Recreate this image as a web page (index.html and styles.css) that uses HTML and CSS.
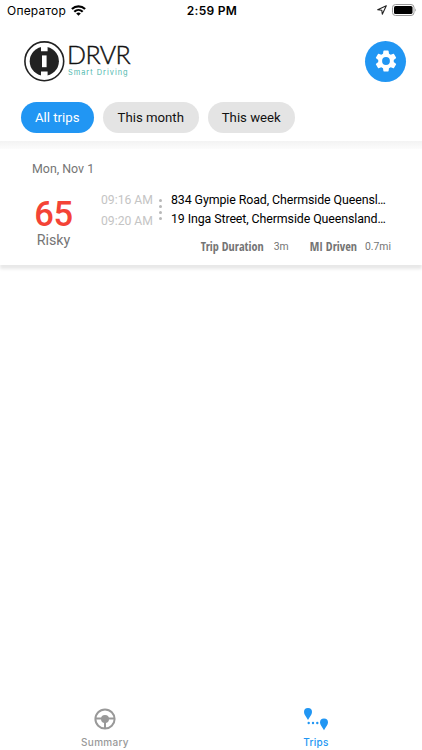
FILE: index.html
```
<!DOCTYPE html>
<html lang="en">
<head>
<meta charset="UTF-8">
<meta name="viewport" content="width=device-width, initial-scale=1.0">
<title>Trips - DRVR</title>
<link rel="stylesheet" href="styles.css">
</head>
<body>

<div class="status-bar">
  <div class="carrier">
    <span>Оператор</span>
    <svg width="15" height="11" viewBox="0 0 15 11" fill="none" stroke="#000" stroke-width="2.2">
      <path d="M.9 4C4.7.4 10.3.4 14.1 4M3.3 6.7C5.7 4.4 9.3 4.4 11.7 6.7"/>
      <path d="M7.5 10.8L5.2 8.4Q7.5 6.5 9.8 8.4Z" fill="#000" stroke="none"/>
    </svg>
  </div>
  <div class="time">2:59 PM</div>
  <div class="indicators">
    <svg width="10" height="10" viewBox="0 0 10 10" fill="none" stroke="#222" stroke-width="1.1" stroke-linejoin="round">
      <path d="M9.3.7L.7 4.7L4.8 5.2L5.3 9.3Z"/>
    </svg>
    <svg width="25" height="12" viewBox="0 0 25 12">
      <rect x=".5" y=".5" width="21.5" height="11" rx="3" fill="#fff" stroke="#999"/>
      <rect x="2" y="2" width="18.5" height="8" rx="1.6"/>
      <path d="M23.2 4.2Q25 6 23.2 7.8Z" fill="#999"/>
    </svg>
  </div>
</div>

<header>
  <div class="logo">
    <svg width="41" height="41" viewBox="0 0 41 41">
      <circle cx="20.3" cy="20.3" r="19.4" fill="#fff" stroke="#222" stroke-width="1.6"/>
      <circle cx="20.3" cy="20.3" r="14.6" fill="#222"/>
      <path d="M17 5h6.6v5.2H17zM17 30.4h6.6v5.2H17z" fill="#fff"/>
      <path d="M18 14.4h4.6v11.8H18z" fill="#fff"/>
    </svg>
    <div class="logo-text">
      <div class="logo-name">DRVR</div>
      <div class="logo-tagline">Smart Driving</div>
    </div>
  </div>
  <button class="settings-btn" type="button" aria-label="Settings">
    <svg width="26" height="26" viewBox="0 0 24 24" fill="#fff">
      <path d="M19.14 12.94c.04-.3.06-.61.06-.94s-.02-.64-.07-.94l2.03-1.58a.49.49 0 0 0 .12-.61l-1.92-3.32a.49.49 0 0 0-.59-.22l-2.39.96a7 7 0 0 0-1.62-.94l-.36-2.54A.48.48 0 0 0 13.92 2.4h-3.84a.48.48 0 0 0-.48.41l-.36 2.54c-.59.24-1.13.57-1.62.94l-2.39-.96a.48.48 0 0 0-.59.22L2.72 8.87a.48.48 0 0 0 .12.61l2.03 1.58c-.05.3-.07.62-.07.94s.02.64.07.94l-2.03 1.58a.49.49 0 0 0-.12.61l1.92 3.32c.12.22.37.29.59.22l2.39-.96c.5.38 1.03.7 1.62.94l.36 2.54c.05.24.24.41.48.41h3.84c.24 0 .44-.17.47-.41l.36-2.54a6.7 6.7 0 0 0 1.62-.94l2.39.96c.22.08.47 0 .59-.22l1.92-3.32a.48.48 0 0 0-.12-.61zM12 15.6a3.6 3.6 0 1 1 0-7.2 3.6 3.6 0 0 1 0 7.2z"/>
    </svg>
  </button>
</header>

<div class="filters">
  <button type="button" class="chip active">All trips</button>
  <button type="button" class="chip month">This month</button>
  <button type="button" class="chip week">This week</button>
</div>

<main>
  <div class="trip-card">
    <div class="trip-date">Mon, Nov 1</div>
    <div class="trip-body">
      <div class="score">
        <div class="score-value">65</div>
        <div class="score-label">Risky</div>
      </div>
      <div class="trip-info">
        <div class="route">
          <div class="times">
            <div>09:16 AM</div>
            <div>09:20 AM</div>
          </div>
          <div class="dots"><i></i><i></i><i></i><i></i></div>
          <div class="places">
            <div>834 Gympie Road, Chermside Queensl…</div>
            <div>19 Inga Street, Chermside Queensland…</div>
          </div>
        </div>
        <div class="stats">
          <span class="stat-name duration">Trip Duration</span>
          <span class="stat-value">3m</span>
          <span class="stat-name driven">MI Driven</span>
          <span class="stat-value">0.7mi</span>
        </div>
      </div>
    </div>
  </div>
</main>

<nav>
  <a href="#" class="tab">
    <svg width="22" height="22" viewBox="0 0 22 22" fill="none" stroke="#999" stroke-width="2">
      <circle cx="11" cy="11" r="9.6"/>
      <path d="M2 10.5h18M11 13v7.5"/>
      <circle cx="11" cy="11" r="3" fill="#999"/>
    </svg>
    <span>Summary</span>
  </a>
  <a href="#" class="tab active">
    <svg width="26" height="24" viewBox="0 0 26 24" fill="#2196f3">
      <path d="M5 1a4 4 0 0 1 4 4c0 2.8-2.3 4.8-4 8-1.7-3.2-4-5.2-4-8a4 4 0 0 1 4-4zM21 11.6a4 4 0 0 1 4 4c0 2.6-2.3 4.4-4 7.7-1.7-3.3-4-5.1-4-7.7a4 4 0 0 1 4-4z"/>
      <circle cx="5.7" cy="16" r="1.2"/>
      <circle cx="10" cy="16" r="1.2"/>
      <circle cx="14.3" cy="16" r="1.2"/>
    </svg>
    <span>Trips</span>
  </a>
</nav>

</body>
</html>
```
FILE: styles.css
```
* {
  box-sizing: border-box;
}

body {
  font-family: Roboto, "Liberation Sans", sans-serif;
  margin: 0;
  height: 100vh;
  display: flex;
  flex-direction: column;
  background: #fff;
  color: #000;
  overflow: hidden;
}

button {
  font-family: inherit;
  border: none;
  padding: 0;
}

svg {
  display: block;
  flex: none;
}

.status-bar {
  display: grid;
  grid-template-columns: 1fr auto 1fr;
  align-items: center;
  height: 22px;
  padding: 0 5px 0 7px;
  font-family: Inter, sans-serif;
  font-size: 12px;
  line-height: 22px;
}

.carrier {
  display: flex;
  align-items: center;
  gap: 5px;
  letter-spacing: 0.2px;
}

.carrier svg {
  margin-top: -2px;
}

.time {
  font-weight: 600;
  letter-spacing: 0.3px;
}

.indicators {
  display: flex;
  align-items: center;
  justify-content: flex-end;
  gap: 5px;
  margin-top: -2px;
}

header {
  display: flex;
  justify-content: space-between;
  align-items: center;
  height: 80px;
  padding: 0 16px 2px 24px;
}

.logo {
  display: flex;
  gap: 2px;
}

.logo-name {
  font-family: Lato, sans-serif;
  font-size: 25px;
  font-weight: 300;
  line-height: 27px;
  letter-spacing: -0.6px;
  -webkit-text-stroke: 0.4px #111;
  color: #111;
}

.logo-tagline {
  font-family: Inter, sans-serif;
  font-size: 7.4px;
  line-height: 9px;
  letter-spacing: 1px;
  color: #4fb8ae;
  padding-left: 1px;
}

.settings-btn {
  width: 41px;
  height: 41px;
  border-radius: 50%;
  background: #2196f3;
  display: flex;
  align-items: center;
  justify-content: center;
}

.filters {
  display: flex;
  gap: 9px;
  height: 39px;
  padding-left: 20.5px;
}

.chip {
  height: 31px;
  width: 73.5px;
  border-radius: 16px;
  background: #e4e4e4;
  color: #111;
  font-size: 13.2px;
}

.chip.month {
  width: 95.5px;
}

.chip.week {
  width: 87.5px;
}

.chip.active {
  background: #2196f3;
  color: #fff;
}

main {
  flex: 1;
  padding-top: 8px;
  background: linear-gradient(#f3f3f3, #fcfcfc 8px, #fff 8px);
}

.trip-card {
  height: 116px;
  padding: 11px 31px 0 32px;
  background: #fff;
  box-shadow: 0 4px 3px #e8e8e8;
}

.trip-date {
  font-size: 12.4px;
  line-height: 18px;
  color: #757575;
}

.trip-body {
  display: flex;
  padding-top: 12px;
}

.score {
  width: 43px;
  margin-right: 26px;
  padding-top: 6px;
  text-align: center;
}

.score-value {
  font-size: 34.5px;
  line-height: 37px;
  font-weight: 500;
  letter-spacing: -0.4px;
  color: #f44336;
}

.score-label {
  font-size: 14.3px;
  line-height: 15px;
  color: #757575;
}

.trip-info {
  flex: 1;
  min-width: 0;
}

.route {
  display: flex;
}

.times {
  width: 58px;
  font-size: 12.2px;
  line-height: 20.5px;
  color: #c4c4c4;
  white-space: nowrap;
}

.dots {
  display: flex;
  flex-direction: column;
  gap: 3px;
  width: 12px;
  padding-top: 9px;
}

.dots i {
  width: 3px;
  height: 3px;
  border-radius: 50%;
  background: #b8b8b8;
}

.places {
  font-size: 12.4px;
  line-height: 19px;
  letter-spacing: -0.1px;
  white-space: nowrap;
}

.stats {
  display: flex;
  justify-content: flex-end;
  align-items: center;
  padding-top: 8px;
  line-height: 16px;
  color: #757575;
}

.stat-name {
  font-family: "Open Sans Condensed", "Open Sans", sans-serif;
  font-stretch: 75%;
  font-size: 12.2px;
  font-weight: 700;
}

.duration {
  margin-right: 10px;
}

.driven {
  margin-left: 21px;
  margin-right: 8px;
}

.stat-value {
  font-size: 10.4px;
}

nav {
  display: flex;
  height: 46px;
}

.tab {
  flex: 1;
  display: flex;
  flex-direction: column;
  align-items: center;
  justify-content: flex-end;
  gap: 5px;
  padding: 0 1px 1px 0;
  font-family: Inter, sans-serif;
  font-size: 10px;
  line-height: 14px;
  font-weight: 500;
  letter-spacing: 0.3px;
  color: #999;
  text-decoration: none;
}

.tab.active {
  gap: 4px;
  color: #2196f3;
}
```
